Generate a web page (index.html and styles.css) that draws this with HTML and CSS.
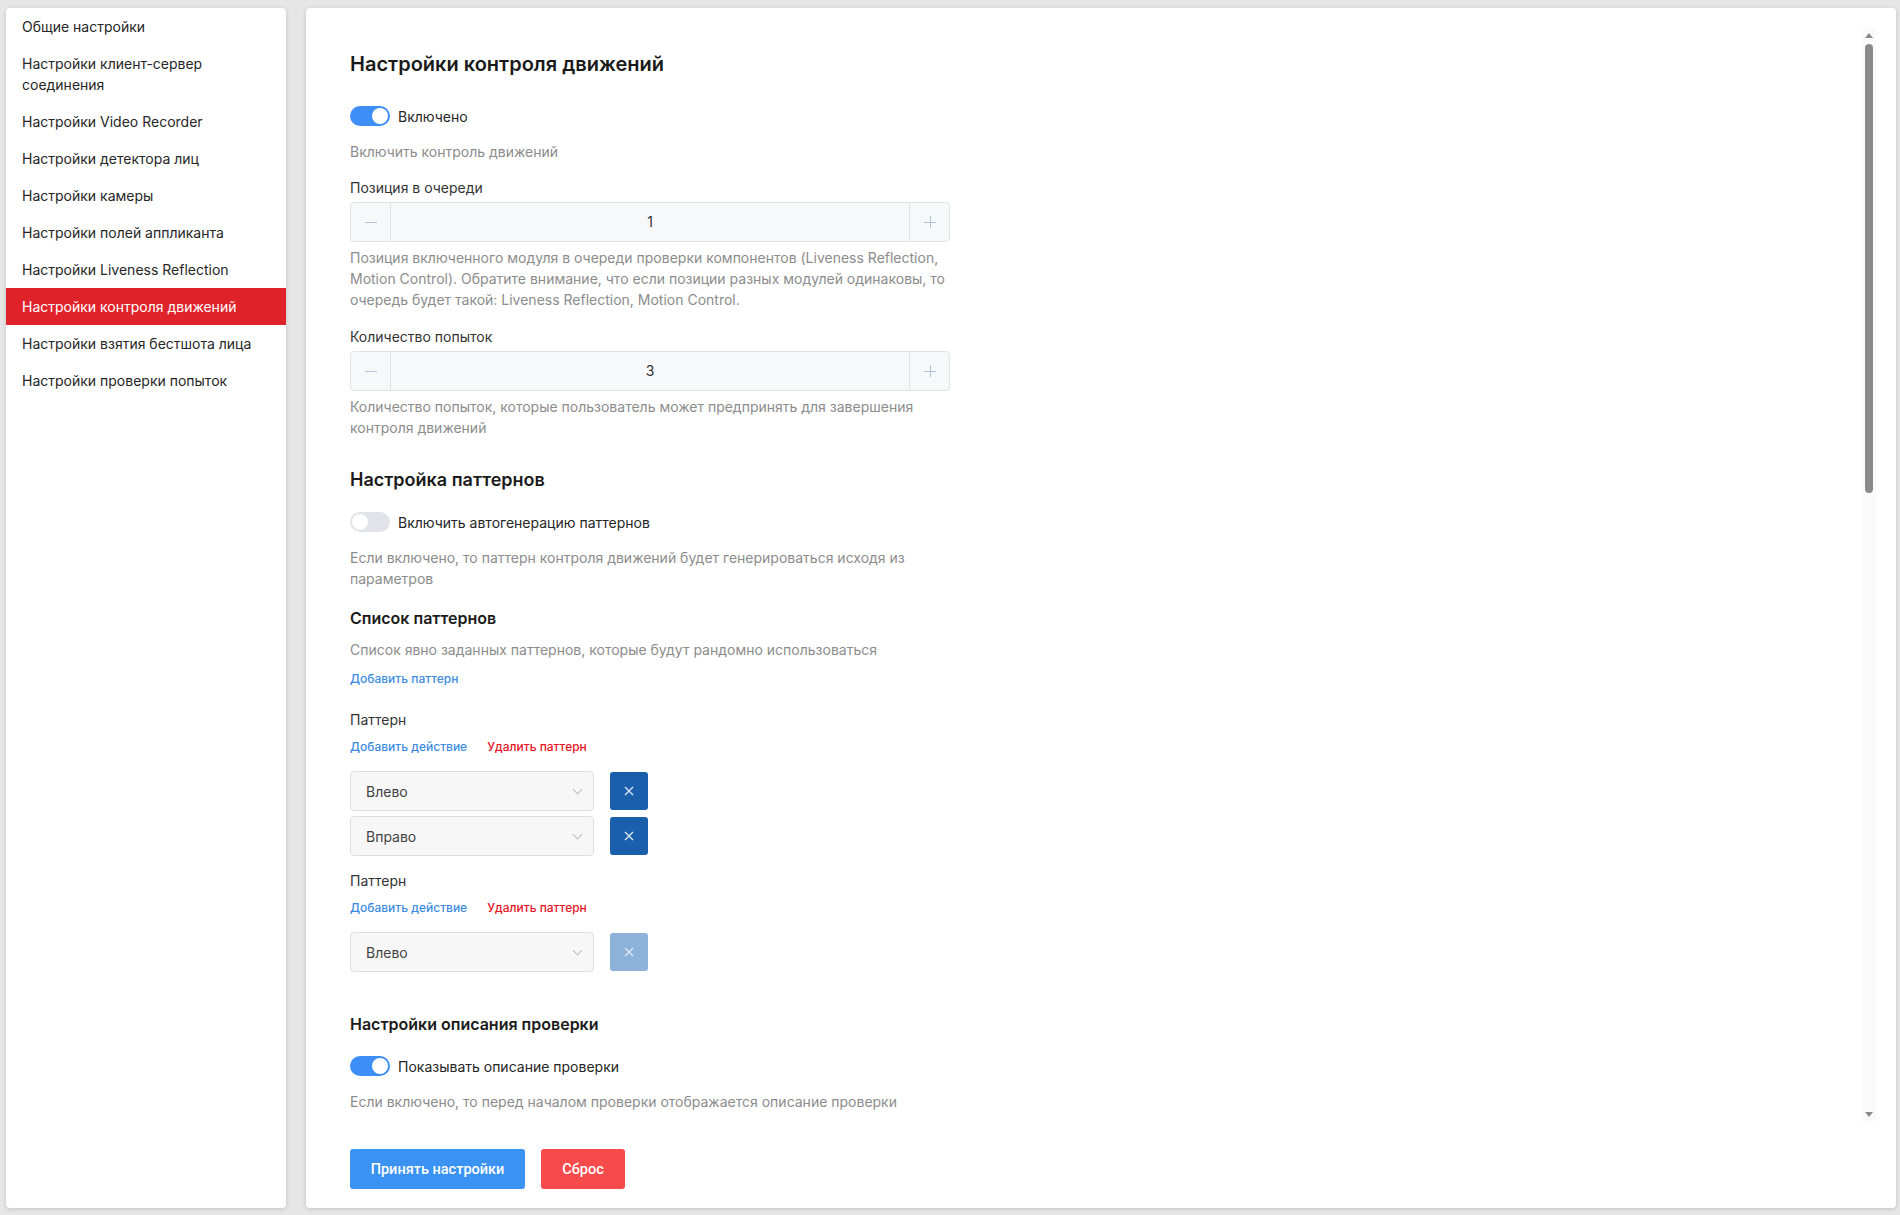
FILE: index.html
```html
<!DOCTYPE html>
<html>
<head>
    <title>Настройки контроля движений</title>
    <link rel="stylesheet" href="styles.css">
</head>
<body>

<nav class="sidebar">
    <div class="nav-item">Общие настройки</div>
    <div class="nav-item">Настройки клиент-сервер соединения</div>
    <div class="nav-item">Настройки Video Recorder</div>
    <div class="nav-item">Настройки детектора лиц</div>
    <div class="nav-item">Настройки камеры</div>
    <div class="nav-item">Настройки полей аппликанта</div>
    <div class="nav-item">Настройки Liveness Reflection</div>
    <div class="nav-item active">Настройки контроля движений</div>
    <div class="nav-item">Настройки взятия бестшота лица</div>
    <div class="nav-item">Настройки проверки попыток</div>
</nav>

<main class="card">
    <div class="scroll">
        <div class="form">
            <h1 class="title">Настройки контроля движений</h1>

            <div class="switch-row sw-first">
                <span class="switch on"></span>
                <span>Включено</span>
            </div>
            <div class="desc d-switch">Включить контроль движений</div>

            <div class="label l-first">Позиция в очереди</div>
            <div class="stepper">
                <span class="step"><svg width="12" height="12" viewBox="0 0 12 12"><path d="M0 6.5h12" stroke="currentColor" stroke-width="1"/></svg></span>
                <span class="value">1</span>
                <span class="step"><svg width="12" height="12" viewBox="0 0 12 12"><path d="M0 6.5h12M6.5 0v12" stroke="currentColor" stroke-width="1"/></svg></span>
            </div>
            <div class="desc d-input">Позиция включенного модуля в очереди проверки компонентов (Liveness Reflection, Motion Control). Обратите внимание, что если позиции разных модулей одинаковы, то очередь будет такой: Liveness Reflection, Motion Control.</div>

            <div class="label l-next">Количество попыток</div>
            <div class="stepper">
                <span class="step"><svg width="12" height="12" viewBox="0 0 12 12"><path d="M0 6.5h12" stroke="currentColor" stroke-width="1"/></svg></span>
                <span class="value">3</span>
                <span class="step"><svg width="12" height="12" viewBox="0 0 12 12"><path d="M0 6.5h12M6.5 0v12" stroke="currentColor" stroke-width="1"/></svg></span>
            </div>
            <div class="desc d-input">Количество попыток, которые пользователь может предпринять для завершения контроля движений</div>

            <h2 class="section">Настройка паттернов</h2>
            <div class="switch-row sw-section">
                <span class="switch"></span>
                <span>Включить автогенерацию паттернов</span>
            </div>
            <div class="desc d-switch">Если включено, то паттерн контроля движений будет генерироваться исходя из параметров</div>

            <h3 class="subsection s-list">Список паттернов</h3>
            <div class="desc d-sub">Список явно заданных паттернов, которые будут рандомно использоваться</div>
            <div class="links l-add"><a class="link">Добавить паттерн</a></div>

            <div class="pattern p-first">
                <div class="label">Паттерн</div>
                <div class="links">
                    <a class="link">Добавить действие</a>
                    <a class="link danger">Удалить паттерн</a>
                </div>
                <div class="actions">
                    <div class="action">
                        <div class="select">Влево<span class="chevron"></span></div>
                        <span class="remove"><svg width="10" height="10" viewBox="0 0 10 10"><path d="M1 1l8 8M9 1l-8 8" stroke="currentColor" stroke-width="1.3"/></svg></span>
                    </div>
                    <div class="action">
                        <div class="select">Вправо<span class="chevron"></span></div>
                        <span class="remove"><svg width="10" height="10" viewBox="0 0 10 10"><path d="M1 1l8 8M9 1l-8 8" stroke="currentColor" stroke-width="1.3"/></svg></span>
                    </div>
                </div>
            </div>

            <div class="pattern p-next">
                <div class="label">Паттерн</div>
                <div class="links">
                    <a class="link">Добавить действие</a>
                    <a class="link danger">Удалить паттерн</a>
                </div>
                <div class="actions">
                    <div class="action">
                        <div class="select">Влево<span class="chevron"></span></div>
                        <span class="remove disabled"><svg width="10" height="10" viewBox="0 0 10 10"><path d="M1 1l8 8M9 1l-8 8" stroke="currentColor" stroke-width="1.3"/></svg></span>
                    </div>
                </div>
            </div>

            <h3 class="subsection s-desc">Настройки описания проверки</h3>
            <div class="switch-row sw-section">
                <span class="switch on"></span>
                <span>Показывать описание проверки</span>
            </div>
            <div class="desc d-switch">Если включено, то перед началом проверки отображается описание проверки</div>
        </div>

        <div class="rail">
            <span class="arrow up"></span>
            <span class="thumb"></span>
            <span class="arrow down"></span>
        </div>
    </div>

    <div class="footer">
        <button class="btn primary">Принять настройки</button>
        <button class="btn reset">Сброс</button>
    </div>
</main>

</body>
</html>
```

FILE: styles.css
```css
:root {
    --bg-color: #e6e6e6;
    --text-color: #262626;
    --muted: #8c8c8c;
    --blue: #3a8ff2;
    --red: #e3202a;
}

* {
    box-sizing: border-box;
}

html, body {
    height: 100%;
}

body {
    margin: 0;
    padding: 8px 4px 7px 6px;
    display: flex;
    gap: 20px;
    background: var(--bg-color);
    color: var(--text-color);
    font-family: Inter, 'Noto Sans', sans-serif;
    font-size: 14px;
    line-height: 21px;
}

/* sidebar */

.sidebar {
    width: 280px;
    flex-shrink: 0;
    background: #fff;
    border-radius: 4px;
    box-shadow: 0 1px 4px rgba(0,0,0,0.16);
}

.nav-item {
    padding: 8px 16px;
    color: #262626;
}

.nav-item.active {
    background: #e0232b;
    color: #fff;
}

/* main card */

.card {
    flex: 1;
    display: flex;
    flex-direction: column;
    background: #fff;
    border-radius: 4px;
    box-shadow: 0 1px 4px rgba(0,0,0,0.16);
    padding: 20px 20px 19px 44px;
}

.scroll {
    flex: 1;
    display: flex;
    min-height: 0;
}

.form {
    flex: 1;
    padding-top: 22px;
}

.form > * {
    width: 600px;
}

.title {
    margin: 0;
    font-size: 20px;
    line-height: 28px;
    font-weight: 600;
    color: #1a1a1a;
}

.section {
    margin: 29px 0 0;
    font-size: 18px;
    line-height: 26px;
    font-weight: 600;
    color: #1a1a1a;
}

.subsection {
    margin: 0;
    font-size: 16px;
    line-height: 24px;
    font-weight: 600;
    color: #1a1a1a;
}

.s-list { margin-top: 17px; }
.s-desc { margin-top: 40px; }

.switch-row {
    display: flex;
    align-items: center;
    gap: 8px;
    height: 20px;
}

.sw-first { margin-top: 28px; }
.sw-section { margin-top: 19px; }
.s-desc + .sw-section { margin-top: 20px; }

.switch {
    width: 40px;
    height: 20px;
    border-radius: 10px;
    background: #e1e3e8;
    position: relative;
    flex-shrink: 0;
}

.switch::after {
    content: '';
    position: absolute;
    top: 2px;
    left: 2px;
    width: 16px;
    height: 16px;
    border-radius: 50%;
    background: #fff;
}

.switch.on {
    background: #3d8ef7;
}

.switch.on::after {
    left: 22px;
}

.desc {
    color: var(--muted);
}

.d-switch { margin-top: 15px; }
.d-input { margin-top: 5px; }
.d-sub { margin-top: 9px; }

.label {
    color: #333;
}

.l-first { margin-top: 15px; }
.l-next { margin-top: 16px; }

.stepper {
    display: flex;
    height: 40px;
    margin-top: 4px;
    background: #f7f8fa;
    border: 1px solid #e1e3e7;
    border-radius: 4px;
}

.step {
    width: 40px;
    display: flex;
    align-items: center;
    justify-content: center;
    color: #b6c2d6;
}

.step:first-child {
    border-right: 1px solid #e1e3e7;
}

.step:last-child {
    border-left: 1px solid #e1e3e7;
}

.value {
    flex: 1;
    text-align: center;
    line-height: 38px;
    color: #333;
}

.links {
    display: flex;
    gap: 20px;
    font-size: 12px;
    line-height: 20px;
    font-weight: 500;
    margin-top: 7px;
}

.l-add { margin-top: 9px; }

.link {
    color: #3b8be3;
    cursor: pointer;
}

.link.danger {
    color: #e5141f;
}

.p-first { margin-top: 20px; }
.p-next { margin-top: 14px; }

.actions {
    display: flex;
    flex-direction: column;
    gap: 5px;
    margin-top: 14px;
}

.action {
    display: flex;
    align-items: center;
    gap: 16px;
}

.select {
    width: 244px;
    height: 40px;
    display: flex;
    align-items: center;
    justify-content: space-between;
    padding: 0 12px 0 15px;
    background: #f7f7f7;
    border: 1px solid #dedede;
    border-radius: 4px;
    color: #444;
}

.chevron {
    width: 7px;
    height: 7px;
    border-right: 1px solid #bdbdbd;
    border-bottom: 1px solid #bdbdbd;
    transform: rotate(45deg);
    margin-top: -4px;
}

.remove {
    width: 38px;
    height: 38px;
    display: flex;
    align-items: center;
    justify-content: center;
    background: #1a5fab;
    color: #dfe9f5;
    border-radius: 3px;
}

.remove.disabled {
    background: #8db2d9;
    color: #e2ecf6;
}

/* scrollbar */

.rail {
    width: 14px;
    display: flex;
    flex-direction: column;
    align-items: center;
    background: #fbfbfb;
}

.arrow {
    width: 0;
    height: 0;
    border-left: 4.5px solid transparent;
    border-right: 4.5px solid transparent;
}

.arrow.up {
    margin-top: 5px;
    border-bottom: 5px solid #8a8a8a;
}

.arrow.down {
    margin-top: auto;
    margin-bottom: 5px;
    border-top: 5px solid #8a8a8a;
}

.thumb {
    width: 8px;
    height: 449px;
    margin-top: 6px;
    border-radius: 4px;
    background: #8a8a8a;
}

/* footer */

.footer {
    display: flex;
    gap: 16px;
    margin-top: 27px;
}

.btn {
    height: 40px;
    border: none;
    border-radius: 3px;
    padding: 0 16px;
    color: #fff;
    font-family: Roboto, 'Liberation Sans', sans-serif;
    font-size: 14.5px;
    font-weight: 500;
    cursor: pointer;
}

.btn.primary {
    width: 175px;
    background: #3a93f3;
}

.btn.reset {
    width: 84px;
    background: #f64a4b;
}
```
